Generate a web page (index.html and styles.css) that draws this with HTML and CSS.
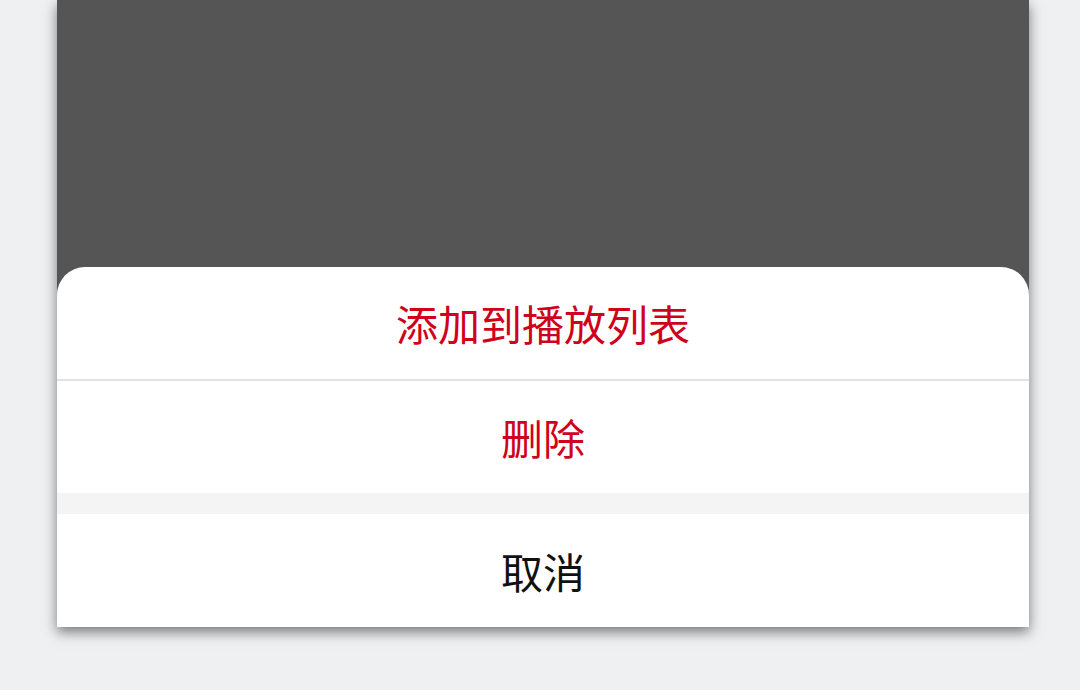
FILE: index.html
```html
<!DOCTYPE html>
<html lang="zh-CN">

<head>
    <meta charset="UTF-8">
    <meta name="viewport" content="width=device-width, initial-scale=1.0">
    <title>操作菜单</title>
    <link rel="stylesheet" href="styles.css">
</head>

<body>
    <!-- 手机画面 -->
    <div class="page">
        <div class="phone">
            <div class="mask"></div>
            <div class="sheet">
                <div class="sheet-item danger line">添加到播放列表</div>
                <div class="sheet-item danger">删除</div>
                <div class="sheet-gap"></div>
                <div class="sheet-item">取消</div>
            </div>
        </div>
    </div>
</body>

</html>
```

FILE: styles.css
```css
/* 页面背景 */
body {
    margin: 0;
    background-color: #eff0f2;
    font-family: "Noto Sans CJK SC", "Noto Sans", sans-serif;
}

.page {
    height: 690px;
    padding-left: 57px;
}

/* 手机容器 */
.phone {
    width: 972px;
    height: 627px;
    display: flex;
    flex-direction: column;
    background-color: #555555;
    box-shadow: 0 5px 12px rgba(0, 0, 0, 0.5);
}

/* 遮罩 */
.mask {
    flex: 1;
}

/* 底部菜单 */
.sheet {
    background-color: #fff;
    border-radius: 28px 28px 0 0;
    overflow: hidden;
}

.sheet-item {
    height: 112px;
    display: flex;
    align-items: center;
    justify-content: center;
    font-size: 42px;
    line-height: 1;
    color: #111;
}

.sheet-item:last-child {
    height: 113px;
}

.danger {
    color: #d0021b;
}

.line {
    border-bottom: 2px solid #e2e2e2;
}

.sheet-gap {
    height: 21px;
    background-color: #f4f4f4;
}
```
